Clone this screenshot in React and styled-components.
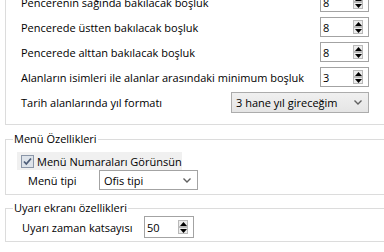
import React from 'react';
import styled, { createGlobalStyle } from 'styled-components';

const GlobalStyle = createGlobalStyle`
  html, body { margin:0; padding:0; background:#fff; overflow:hidden; }
  body {
    font-family: "Open Sans", "Liberation Sans", sans-serif;
    font-size: 11px;
    color:#000;
  }
`;

const Page = styled.div`
  width:384px;
  height:252px;
  overflow:hidden;
`;

const Scroller = styled.div`
  margin-top:-8px;
  padding-left:5px;
  display:flex;
  flex-direction:column;
`;

const Group = styled.fieldset`
  margin:0;
  margin-top:${props => props.$gap || 0}px;
  padding:0;
  width:390px;
  box-sizing:border-box;
  border:1px solid #dcdcdc;
  ${props => props.$open && 'border-top:none;'}
  min-inline-size:auto;
`;

const Legend = styled.legend`
  margin-left:7px;
  padding:0 1px;
  font-size:11px;
  line-height:16px;
  white-space:nowrap;
`;

const Rows = styled.div`
  display:flex;
  flex-direction:column;
  gap:5px;
  padding:0 25px 11px 15px;
`;

const Row = styled.div`
  display:flex;
  align-items:center;
  justify-content:space-between;
  height:${props => props.$h || 20}px;
`;

const Label = styled.span`
  font-size:11px;
  white-space:nowrap;
`;

const SpinBox = styled.div`
  display:flex;
  align-items:center;
  width:${props => props.$w || 49}px;
  height:${props => props.$h || 20}px;
  box-sizing:border-box;
  border:1px solid #a3a3a3;
  background:#fff;
  padding:0 5px 0 2px;
`;

const SpinValue = styled.span`
  flex:1;
  font-size:11px;
`;

const SpinButtons = styled.div`
  display:flex;
  flex-direction:column;
`;

const SpinButton = styled.div`
  width:10px;
  height:${props => props.$h || 6}px;
  box-sizing:border-box;
  border:1px solid #b9b9b9;
  background:#ececec;
  display:flex;
  align-items:center;
  justify-content:center;
`;

const Select = styled.div`
  display:flex;
  align-items:center;
  justify-content:space-between;
  width:${props => props.$w}px;
  height:${props => props.$h || 20}px;
  box-sizing:border-box;
  border:1px solid ${props => props.$flat ? '#a3a3a3' : '#acacac'};
  background:${props => props.$flat ? '#fff' : 'linear-gradient(#f0f0f0, #e5e5e5)'};
  padding:0 6px 0 4px;
  font-size:11px;
  white-space:nowrap;
`;

const CheckRow = styled.div`
  display:flex;
  align-items:center;
  gap:3px;
  margin:5px 0 0 11px;
  width:165px;
  height:18px;
  padding-left:4px;
  box-sizing:border-box;
  background:#f0f0f0;
  font-size:11px;
  white-space:nowrap;
`;

const SubRow = styled.div`
  display:flex;
  align-items:center;
  height:${props => props.$h || 20}px;
  padding-left:${props => props.$indent || 22}px;
  margin-bottom:${props => props.$bottom || 4}px;
`;

const SubLabel = styled.span`
  width:${props => props.$w || 71}px;
  font-size:11px;
  white-space:nowrap;
`;

const Arrow = ({ up }) => (
  <svg width="7" height="4" viewBox="0 0 7 4">
    <path d={up ? 'M0 4 L3.5 0 L7 4 Z' : 'M0 0 L3.5 4 L7 0 Z'} fill="#000" />
  </svg>
);

const Chevron = () => (
  <svg width="8" height="5" viewBox="0 0 8 5">
    <path d="M0.5 0.5 L4 4 L7.5 0.5" fill="none" stroke="#606060" strokeWidth="1.4" />
  </svg>
);

const CheckMark = () => (
  <svg width="13" height="13" viewBox="0 0 13 13">
    <rect x="0.5" y="0.5" width="12" height="12" fill="#dde3ea" stroke="#8a96a8" />
    <path d="M3 6.5 L5.3 9 L10 3.5" fill="none" stroke="#4d5d78" strokeWidth="1.8" />
  </svg>
);

const Spinner = ({ value, w, h, bh }) => (
  <SpinBox $w={w} $h={h}>
    <SpinValue>{value}</SpinValue>
    <SpinButtons>
      <SpinButton $h={bh}><Arrow up /></SpinButton>
      <SpinButton $h={bh}><Arrow /></SpinButton>
    </SpinButtons>
  </SpinBox>
);

const rows = [
  { label: 'Pencerenin sağında bakılacak boşluk', value: '8' },
  { label: 'Pencerede üstten bakılacak boşluk', value: '8' },
  { label: 'Pencerede alttan bakılacak boşluk', value: '8' },
  { label: 'Alanların isimleri ile alanlar arasındaki minimum boşluk', value: '3' },
];

const App = () => {
  return (
    <Page>
      <GlobalStyle />
      <Scroller>
        <Group $open>
          <Rows>
            {rows.map(r => (
              <Row key={r.label}>
                <Label>{r.label}</Label>
                <Spinner value={r.value} bh={7} />
              </Row>
            ))}
            <Row $h={21}>
              <Label>Tarih alanlarında yıl formatı</Label>
              <Select $w={138} $h={21}>
                <span>3 hane yıl gireceğim</span>
                <Chevron />
              </Select>
            </Row>
          </Rows>
        </Group>

        <Group $gap={6}>
          <Legend>Menü Özellikleri</Legend>
          <CheckRow>
            <CheckMark />
            <span>Menü Numaraları Görünsün</span>
          </CheckRow>
          <SubRow>
            <SubLabel>Menü tipi</SubLabel>
            <Select $w={99} $flat>
              <span>Ofis tipi</span>
              <Chevron />
            </Select>
          </SubRow>
        </Group>

        <Group $gap={5}>
          <Legend>Uyarı ekranı özellikleri</Legend>
          <SubRow $indent={16} $h={22} $bottom={3}>
            <SubLabel $w={122}>Uyarı zaman katsayısı</SubLabel>
            <Spinner value="50" w={50} h={22} bh={7} />
          </SubRow>
        </Group>

        <Group $gap={7}>
          <Legend>Kamera özellikleri</Legend>
          <SubRow />
        </Group>
      </Scroller>
    </Page>
  );
};

export default App;
